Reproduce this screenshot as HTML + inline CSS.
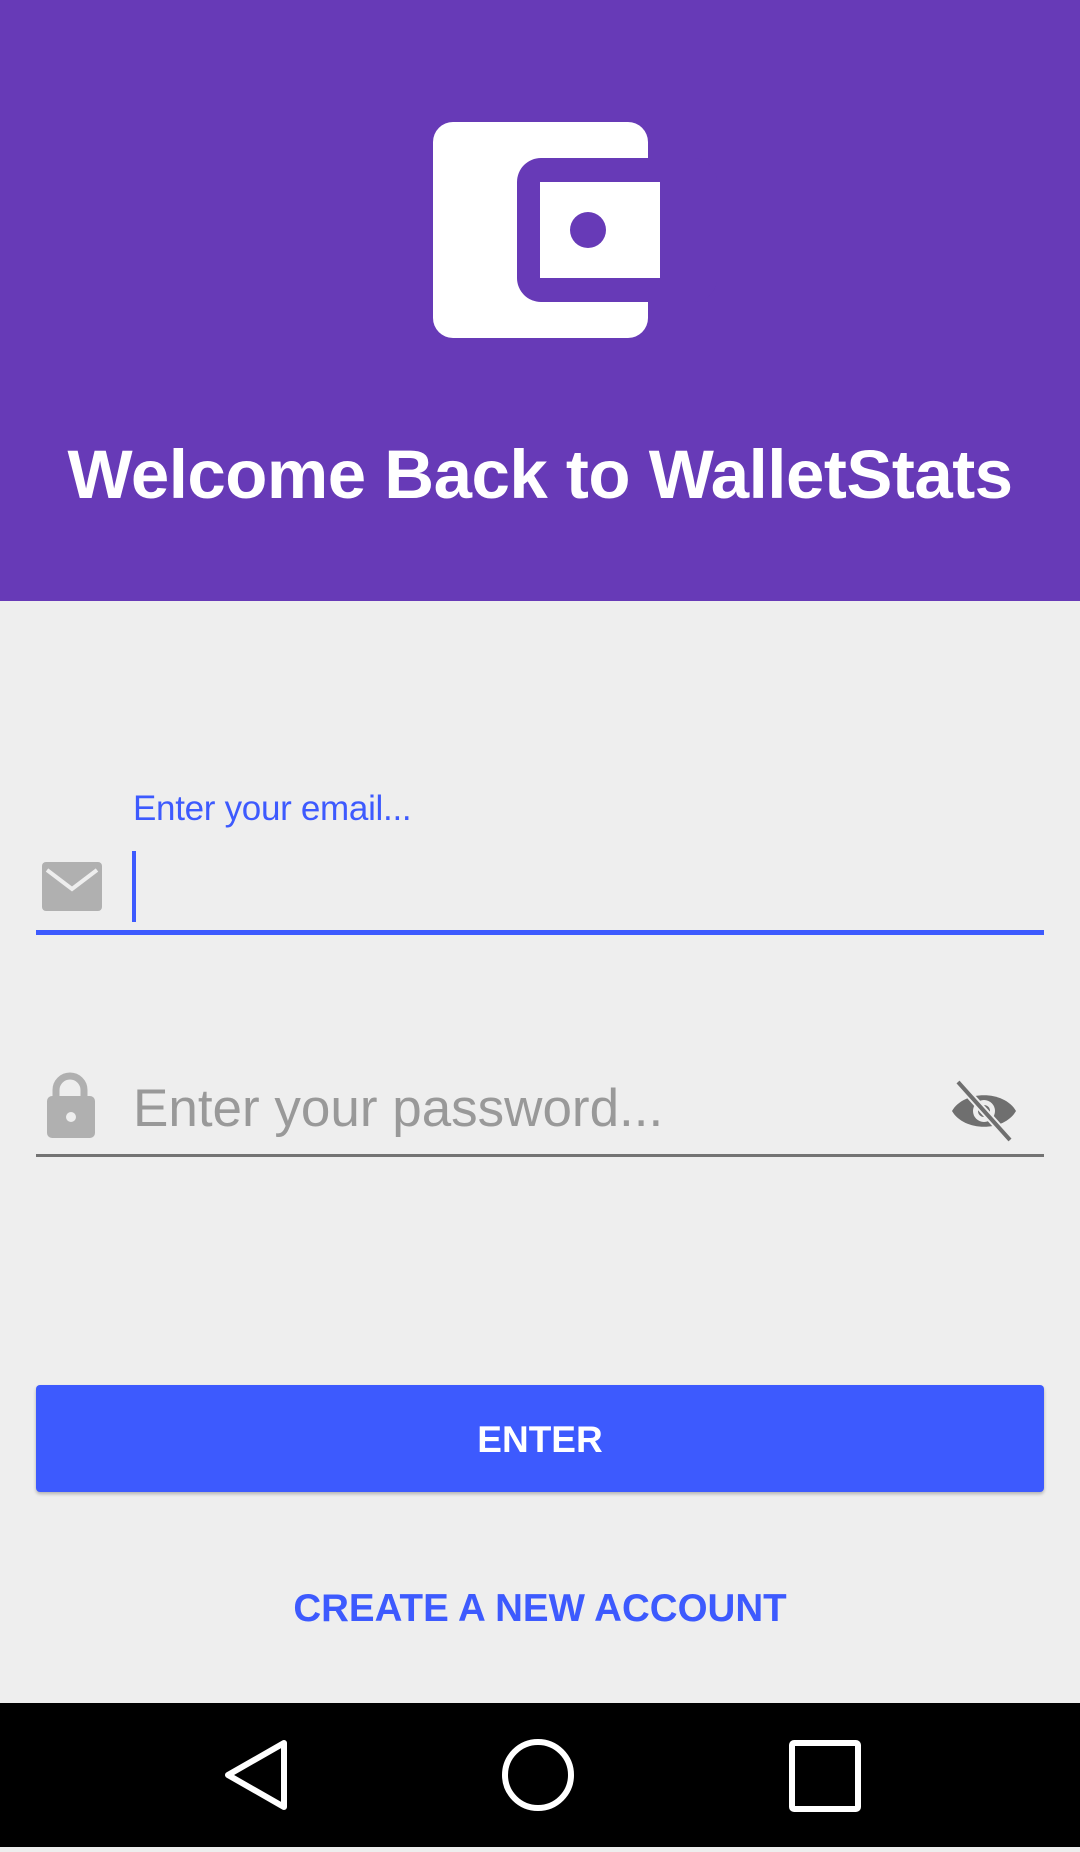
<!DOCTYPE html>
<html><head><meta charset="utf-8"><style>
html,body{margin:0;padding:0}
body{width:1080px;height:1847px;position:relative;background:#eeeeee;font-family:"Liberation Sans",Roboto,sans-serif;overflow:hidden}
.hdr{position:absolute;left:0;top:0;width:1080px;height:601px;background:#673AB7}
.title{position:absolute;left:0;width:1080px;top:435px;text-align:center;color:#fff;font-weight:bold;font-size:69px;line-height:80px;letter-spacing:-0.5px}
.lbl{position:absolute;left:133px;top:789px;color:#3D5AFE;font-size:35px;line-height:40px;letter-spacing:-0.3px}
.cur{position:absolute;left:132px;top:851px;width:4px;height:71px;background:#3D5AFE}
.bl{position:absolute;left:36px;top:930px;width:1008px;height:5px;background:#3D5AFE}
.ph{position:absolute;left:133px;top:1077px;color:#999;font-size:53px;line-height:64px}
.gl{position:absolute;left:36px;top:1154px;width:1008px;height:3px;background:#737373}
.btn{position:absolute;left:36px;top:1385px;width:1008px;height:107px;background:#3D5AFE;border-radius:4px;box-shadow:0 2px 3px rgba(0,0,0,.25);color:#fff;font-size:37px;line-height:110px;text-align:center;font-weight:bold}
.create{position:absolute;left:0;width:1080px;top:1585px;text-align:center;color:#3D5AFE;font-size:38.5px;line-height:48px;font-weight:bold}
.nav{position:absolute;left:0;top:1703px;width:1080px;height:144px;background:#000}
</style></head><body>
<div class="hdr">
<svg width="1080" height="601" style="position:absolute;left:0;top:0">
<rect x="433" y="122" width="215" height="216" rx="20" fill="#fff"/>
<rect x="517" y="158" width="200" height="144" rx="24" fill="#673AB7"/>
<rect x="540" y="182" width="120" height="96" fill="#fff"/>
<circle cx="588" cy="230" r="18" fill="#673AB7"/>
</svg>
<div class="title">Welcome Back to WalletStats</div>
</div>
<div class="lbl">Enter your email...</div>
<svg width="70" height="60" style="position:absolute;left:38px;top:858px">
<rect x="4" y="4" width="60" height="49" rx="4" fill="#b0b0b0"/>
<path d="M9 12 L34 31 L59 12" stroke="#eee" stroke-width="4" fill="none"/>
</svg>
<div class="cur"></div>
<div class="bl"></div>
<svg width="60" height="70" style="position:absolute;left:42px;top:1072px">
<path d="M14 26 V18 A14 14 0 0 1 42 18 V26" stroke="#b0b0b0" stroke-width="7" fill="none"/>
<rect x="5" y="24" width="48" height="42" rx="5" fill="#b0b0b0"/>
<circle cx="29" cy="45" r="5" fill="#eee"/>
</svg>
<div class="ph">Enter your password...</div>
<svg width="72" height="66" style="position:absolute;left:948px;top:1078px">
<path d="M4 33 C16 12 56 12 68 33 C56 54 16 54 4 33Z" fill="#6f6f6f"/>
<circle cx="36" cy="33" r="11" fill="#eee"/>
<circle cx="36" cy="33" r="6" fill="#6f6f6f"/>
<path d="M10 4 L62 62" stroke="#eee" stroke-width="8"/>
<path d="M10 4 L62 62" stroke="#6f6f6f" stroke-width="4"/>
</svg>
<div class="gl"></div>
<div class="btn">ENTER</div>
<div class="create">CREATE A NEW ACCOUNT</div>
<div class="nav">
<svg width="1080" height="144">
<path d="M284 40 L284 104 L228 72 Z" stroke="#fff" stroke-width="6" fill="none" stroke-linejoin="round"/>
<circle cx="538" cy="72" r="33" stroke="#fff" stroke-width="6" fill="none"/>
<rect x="792" y="40" width="66" height="66" rx="2" stroke="#fff" stroke-width="6" fill="none"/>
</svg>
</div>
</body></html>
